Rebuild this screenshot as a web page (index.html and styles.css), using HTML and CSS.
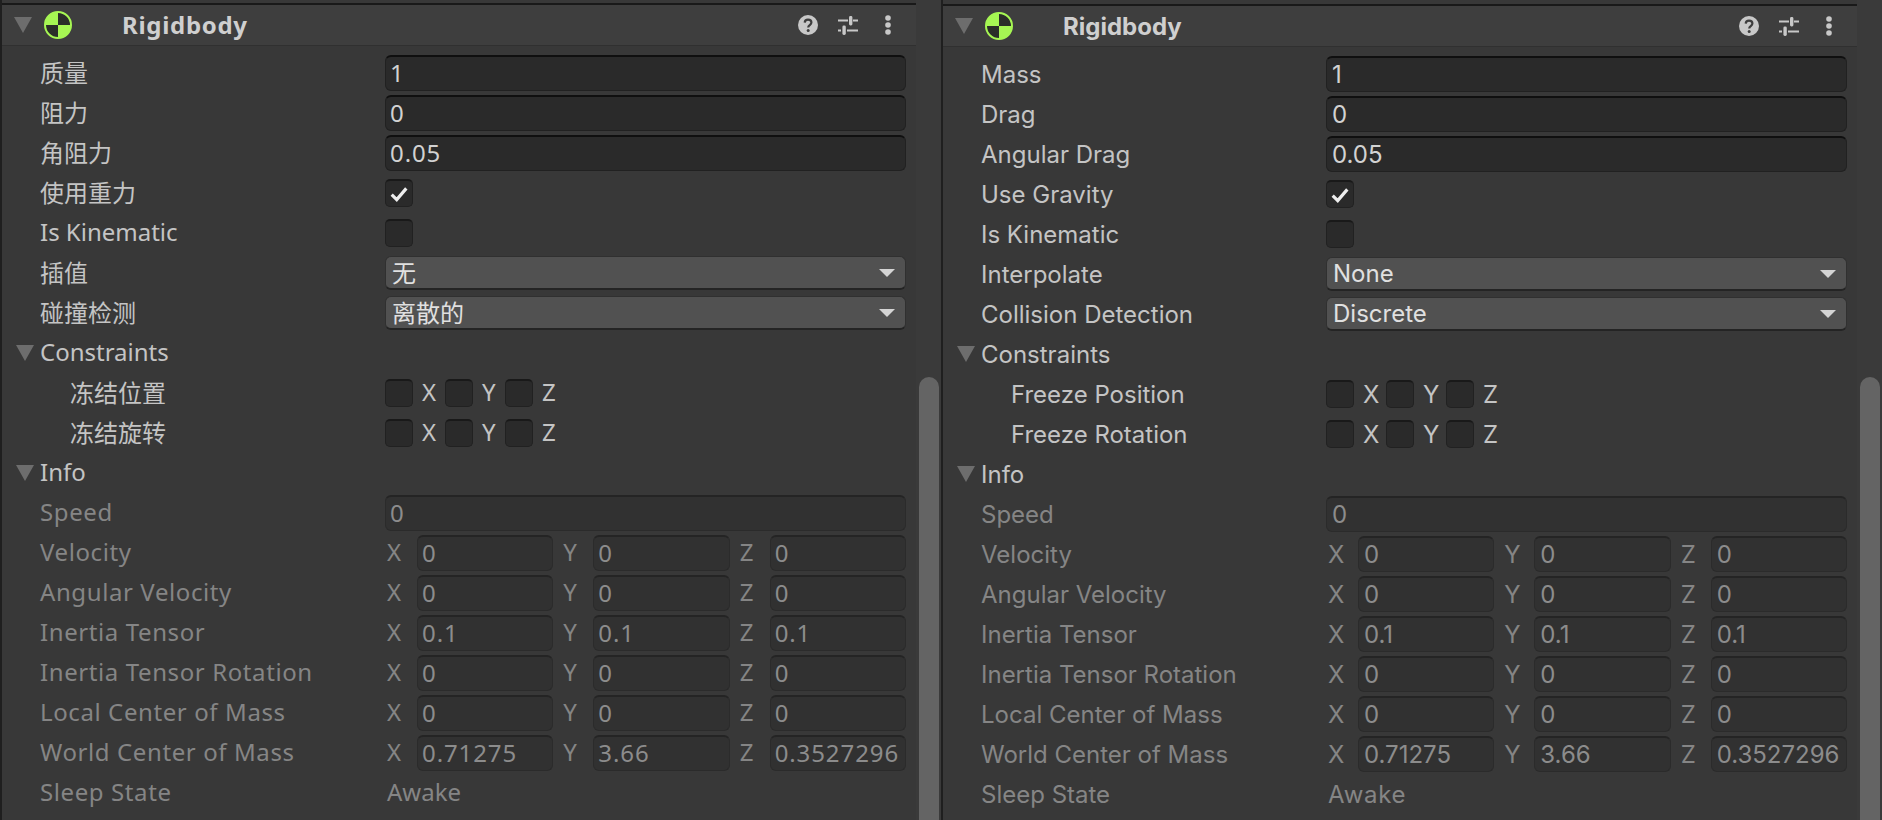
FILE: index.html
```html
<!DOCTYPE html>
<html lang="zh">
<head>
    <meta charset="UTF-8">
    <meta name="viewport" content="width=device-width, initial-scale=1.0">
    <title>Rigidbody Inspector</title>
    <link rel="stylesheet" href="styles.css">
</head>
<body>
    <svg class="icon-defs" width="0" height="0">
        <symbol id="rb-icon" viewBox="0 0 28 28">
            <circle cx="14" cy="14" r="13" fill="#2b2e29" stroke="#a6f653" stroke-width="2"/>
            <path d="M14 14V1A13 13 0 0 0 1 14Z" fill="#a6f653"/>
            <path d="M14 14V27A13 13 0 0 0 27 14Z" fill="#a6f653"/>
        </symbol>
        <symbol id="help-icon" viewBox="0 0 20 20">
            <circle cx="10" cy="10" r="10" fill="#c8c8c8"/>
            <path d="M6.7 7.6C6.8 5.6 8.2 4.6 10 4.6c2 0 3.4 1.1 3.4 2.8 0 2.6-3.2 2.6-3.2 5" fill="none" stroke="#3e3e3e" stroke-width="2.2"/>
            <circle cx="10.2" cy="15.4" r="1.5" fill="#3e3e3e"/>
        </symbol>
        <symbol id="preset-icon" viewBox="0 0 20 20">
            <path d="M0 5.5H10M15 5.5H20M0 15.5H3M9 15.5H20" fill="none" stroke="#c8c8c8" stroke-width="2"/>
            <rect x="11" y="1" width="3.4" height="9.5" rx="1.4" fill="#c8c8c8"/>
            <rect x="4.4" y="10.5" width="3.4" height="9.5" rx="1.4" fill="#c8c8c8"/>
        </symbol>
        <symbol id="more-icon" viewBox="0 0 6 20">
            <circle cx="3" cy="3" r="2.8" fill="#c8c8c8"/>
            <circle cx="3" cy="10" r="2.8" fill="#c8c8c8"/>
            <circle cx="3" cy="17" r="2.8" fill="#c8c8c8"/>
        </symbol>
        <symbol id="check-icon" viewBox="0 0 16 14">
            <path d="M1.5 7.5L6 12L14.5 2" fill="none" stroke="#eeeeee" stroke-width="2.8"/>
        </symbol>
    </svg>

    <section class="panel panel-zh">
        <div class="panel-body">
            <header class="comp-header">
                <span class="arrow arrow-header"></span>
                <svg class="rb-icon"><use href="#rb-icon"/></svg>
                <span class="comp-title">Rigidbody</span>
                <svg class="tool-icon"><use href="#help-icon"/></svg>
                <svg class="tool-icon"><use href="#preset-icon"/></svg>
                <svg class="tool-more"><use href="#more-icon"/></svg>
            </header>
            <div class="rows">
                <div class="row"><label>质量</label><div class="field">1</div></div>
                <div class="row"><label>阻力</label><div class="field">0</div></div>
                <div class="row"><label>角阻力</label><div class="field">0.05</div></div>
                <div class="row"><label>使用重力</label><span class="check"><svg class="tick"><use href="#check-icon"/></svg></span></div>
                <div class="row"><label>Is Kinematic</label><span class="check"></span></div>
                <div class="row"><label>插值</label><div class="dropdown">无<span class="caret"></span></div></div>
                <div class="row"><label>碰撞检测</label><div class="dropdown">离散的<span class="caret"></span></div></div>
                <div class="row foldout"><span class="arrow"></span><span class="foldout-text">Constraints</span></div>
                <div class="row sub"><label>冻结位置</label><div class="axis-checks"><span class="check"></span><span>X</span><span class="check"></span><span>Y</span><span class="check"></span><span>Z</span></div></div>
                <div class="row sub"><label>冻结旋转</label><div class="axis-checks"><span class="check"></span><span>X</span><span class="check"></span><span>Y</span><span class="check"></span><span>Z</span></div></div>
                <div class="row foldout"><span class="arrow"></span><span class="foldout-text">Info</span></div>
                <div class="row off"><label>Speed</label><div class="field">0</div></div>
                <div class="row off"><label>Velocity</label><div class="vec"><span>X</span><div class="field">0</div><span>Y</span><div class="field">0</div><span>Z</span><div class="field">0</div></div></div>
                <div class="row off"><label>Angular Velocity</label><div class="vec"><span>X</span><div class="field">0</div><span>Y</span><div class="field">0</div><span>Z</span><div class="field">0</div></div></div>
                <div class="row off"><label>Inertia Tensor</label><div class="vec"><span>X</span><div class="field">0.1</div><span>Y</span><div class="field">0.1</div><span>Z</span><div class="field">0.1</div></div></div>
                <div class="row off"><label>Inertia Tensor Rotation</label><div class="vec"><span>X</span><div class="field">0</div><span>Y</span><div class="field">0</div><span>Z</span><div class="field">0</div></div></div>
                <div class="row off"><label>Local Center of Mass</label><div class="vec"><span>X</span><div class="field">0</div><span>Y</span><div class="field">0</div><span>Z</span><div class="field">0</div></div></div>
                <div class="row off"><label>World Center of Mass</label><div class="vec"><span>X</span><div class="field">0.71275</div><span>Y</span><div class="field">3.66</div><span>Z</span><div class="field">0.3527296</div></div></div>
                <div class="row off"><label>Sleep State</label><span class="value">Awake</span></div>
            </div>
        </div>
        <div class="scrollbar"><div class="thumb"></div></div>
    </section>

    <section class="panel panel-en">
        <div class="panel-body">
            <header class="comp-header">
                <span class="arrow arrow-header"></span>
                <svg class="rb-icon"><use href="#rb-icon"/></svg>
                <span class="comp-title">Rigidbody</span>
                <svg class="tool-icon"><use href="#help-icon"/></svg>
                <svg class="tool-icon"><use href="#preset-icon"/></svg>
                <svg class="tool-more"><use href="#more-icon"/></svg>
            </header>
            <div class="rows">
                <div class="row"><label>Mass</label><div class="field">1</div></div>
                <div class="row"><label>Drag</label><div class="field">0</div></div>
                <div class="row"><label>Angular Drag</label><div class="field">0.05</div></div>
                <div class="row"><label>Use Gravity</label><span class="check"><svg class="tick"><use href="#check-icon"/></svg></span></div>
                <div class="row"><label>Is Kinematic</label><span class="check"></span></div>
                <div class="row"><label>Interpolate</label><div class="dropdown">None<span class="caret"></span></div></div>
                <div class="row"><label>Collision Detection</label><div class="dropdown">Discrete<span class="caret"></span></div></div>
                <div class="row foldout"><span class="arrow"></span><span class="foldout-text">Constraints</span></div>
                <div class="row sub"><label>Freeze Position</label><div class="axis-checks"><span class="check"></span><span>X</span><span class="check"></span><span>Y</span><span class="check"></span><span>Z</span></div></div>
                <div class="row sub"><label>Freeze Rotation</label><div class="axis-checks"><span class="check"></span><span>X</span><span class="check"></span><span>Y</span><span class="check"></span><span>Z</span></div></div>
                <div class="row foldout"><span class="arrow"></span><span class="foldout-text">Info</span></div>
                <div class="row off"><label>Speed</label><div class="field">0</div></div>
                <div class="row off"><label>Velocity</label><div class="vec"><span>X</span><div class="field">0</div><span>Y</span><div class="field">0</div><span>Z</span><div class="field">0</div></div></div>
                <div class="row off"><label>Angular Velocity</label><div class="vec"><span>X</span><div class="field">0</div><span>Y</span><div class="field">0</div><span>Z</span><div class="field">0</div></div></div>
                <div class="row off"><label>Inertia Tensor</label><div class="vec"><span>X</span><div class="field">0.1</div><span>Y</span><div class="field">0.1</div><span>Z</span><div class="field">0.1</div></div></div>
                <div class="row off"><label>Inertia Tensor Rotation</label><div class="vec"><span>X</span><div class="field">0</div><span>Y</span><div class="field">0</div><span>Z</span><div class="field">0</div></div></div>
                <div class="row off"><label>Local Center of Mass</label><div class="vec"><span>X</span><div class="field">0</div><span>Y</span><div class="field">0</div><span>Z</span><div class="field">0</div></div></div>
                <div class="row off"><label>World Center of Mass</label><div class="vec"><span>X</span><div class="field">0.71275</div><span>Y</span><div class="field">3.66</div><span>Z</span><div class="field">0.3527296</div></div></div>
                <div class="row off"><label>Sleep State</label><span class="value">Awake</span></div>
            </div>
        </div>
        <div class="scrollbar"><div class="thumb"></div></div>
    </section>
</body>
</html>
```

FILE: styles.css
```css
html, body {
    height: 100%;
}
body {
    margin: 0;
    display: flex;
    overflow: hidden;
    background-color: #383838;
    color: #c4c4c4;
    font-size: 24px;
}
.icon-defs {
    position: absolute;
}
.panel {
    width: 50%;
    height: 820px;
    display: flex;
    overflow: hidden;
    box-sizing: border-box;
    border-left: 2px solid #1f1f1f;
}
.panel-zh {
    font-family: "Noto Sans", "Noto Sans CJK SC", sans-serif;
}
.panel-en {
    font-family: Inter, "Noto Sans", sans-serif;
}
.panel-body {
    flex: 1;
    min-width: 0;
    padding-top: 3px;
    background-color: #383838;
}
.panel-en .panel-body {
    padding-top: 4px;
}
.comp-header {
    height: 40px;
    display: flex;
    align-items: center;
    background-color: #3e3e3e;
    border-top: 2px solid #191919;
    border-bottom: 1px solid #303030;
    padding-left: 12px;
    padding-right: 25px;
}
.arrow {
    width: 0;
    height: 0;
    flex: none;
    border-left: 9px solid transparent;
    border-right: 9px solid transparent;
    border-top: 16px solid #6d6d6d;
}
.rb-icon {
    width: 28px;
    height: 28px;
    margin-left: 12px;
}
.comp-title {
    flex: 1;
    margin-left: 50px;
    font-weight: 700;
    color: #cfcfcf;
}
.panel-zh .comp-title {
    letter-spacing: 0.7px;
    padding-bottom: 2px;
}
.tool-icon {
    width: 20px;
    height: 20px;
    margin-right: 20px;
}
.tool-more {
    width: 6px;
    height: 20px;
    margin-left: 7px;
}
.rows {
    padding-top: 7px;
}
.row {
    height: 40px;
    display: flex;
    align-items: center;
    padding-left: 38px;
    padding-right: 10px;
}
.row label {
    flex: none;
    width: 345px;
}
.row.sub label {
    width: 315px;
    margin-left: 30px;
}
.row.foldout {
    padding-left: 14px;
    gap: 6px;
}
.row.off {
    color: #858585;
}
.panel-zh label,
.panel-zh .foldout-text,
.panel-zh .value,
.panel-zh .vec span,
.panel-zh .axis-checks span:not(.check) {
    padding-bottom: 3px;
}
.panel-zh .off label {
    letter-spacing: 0.6px;
}
.value {
    padding-left: 2px;
}
.panel-en .value {
    letter-spacing: 0.7px;
}
.field {
    flex: 1;
    min-width: 0;
    height: 36px;
    line-height: 34px;
    box-sizing: border-box;
    padding-left: 5px;
    background-color: #2a2a2a;
    border: 1px solid #212121;
    border-top: 2px solid #0f0f0f;
    border-radius: 6px;
    color: #d2d2d2;
    white-space: nowrap;
    overflow: hidden;
}
.panel-zh .field {
    line-height: 32px;
    letter-spacing: 0.9px;
    padding-left: 4px;
}
.row.off .field {
    background-color: #313131;
    border-color: #2b2b2b;
    border-top-color: #242424;
    color: #8c8c8c;
}
.check {
    flex: none;
    width: 28px;
    height: 28px;
    box-sizing: border-box;
    display: flex;
    align-items: center;
    justify-content: center;
    background-color: #2a2a2a;
    border: 1px solid #212121;
    border-top: 2px solid #191919;
    border-radius: 5px;
}
.tick {
    width: 18px;
    height: 16px;
}
.dropdown {
    flex: 1;
    height: 34px;
    line-height: 32px;
    box-sizing: border-box;
    display: flex;
    align-items: center;
    justify-content: space-between;
    padding-left: 6px;
    padding-right: 10px;
    background-color: #515151;
    border: 1px solid #303030;
    border-bottom: 2px solid #242424;
    border-radius: 6px;
    color: #e0e0e0;
}
.caret {
    width: 0;
    height: 0;
    border-left: 8px solid transparent;
    border-right: 8px solid transparent;
    border-top: 8px solid #d4d4d4;
}
.axis-checks {
    display: grid;
    grid-template-columns: 28px 32px 28px 32px 28px 32px;
    align-items: center;
}
.axis-checks span:not(.check) {
    padding-left: 9px;
}
.vec {
    flex: 1;
    min-width: 0;
    display: grid;
    grid-template-columns: 24px 1fr 24px 1fr 24px 1fr;
    column-gap: 8px;
    align-items: center;
}
.vec span {
    padding-left: 2px;
}
.scrollbar {
    flex: none;
    width: 25px;
    box-sizing: border-box;
    background-color: #3a3a3a;
    padding-top: 377px;
    padding-left: 3px;
}
.thumb {
    width: 20px;
    height: 460px;
    border-radius: 10px 10px 0 0;
    background-color: #646464;
}
```
